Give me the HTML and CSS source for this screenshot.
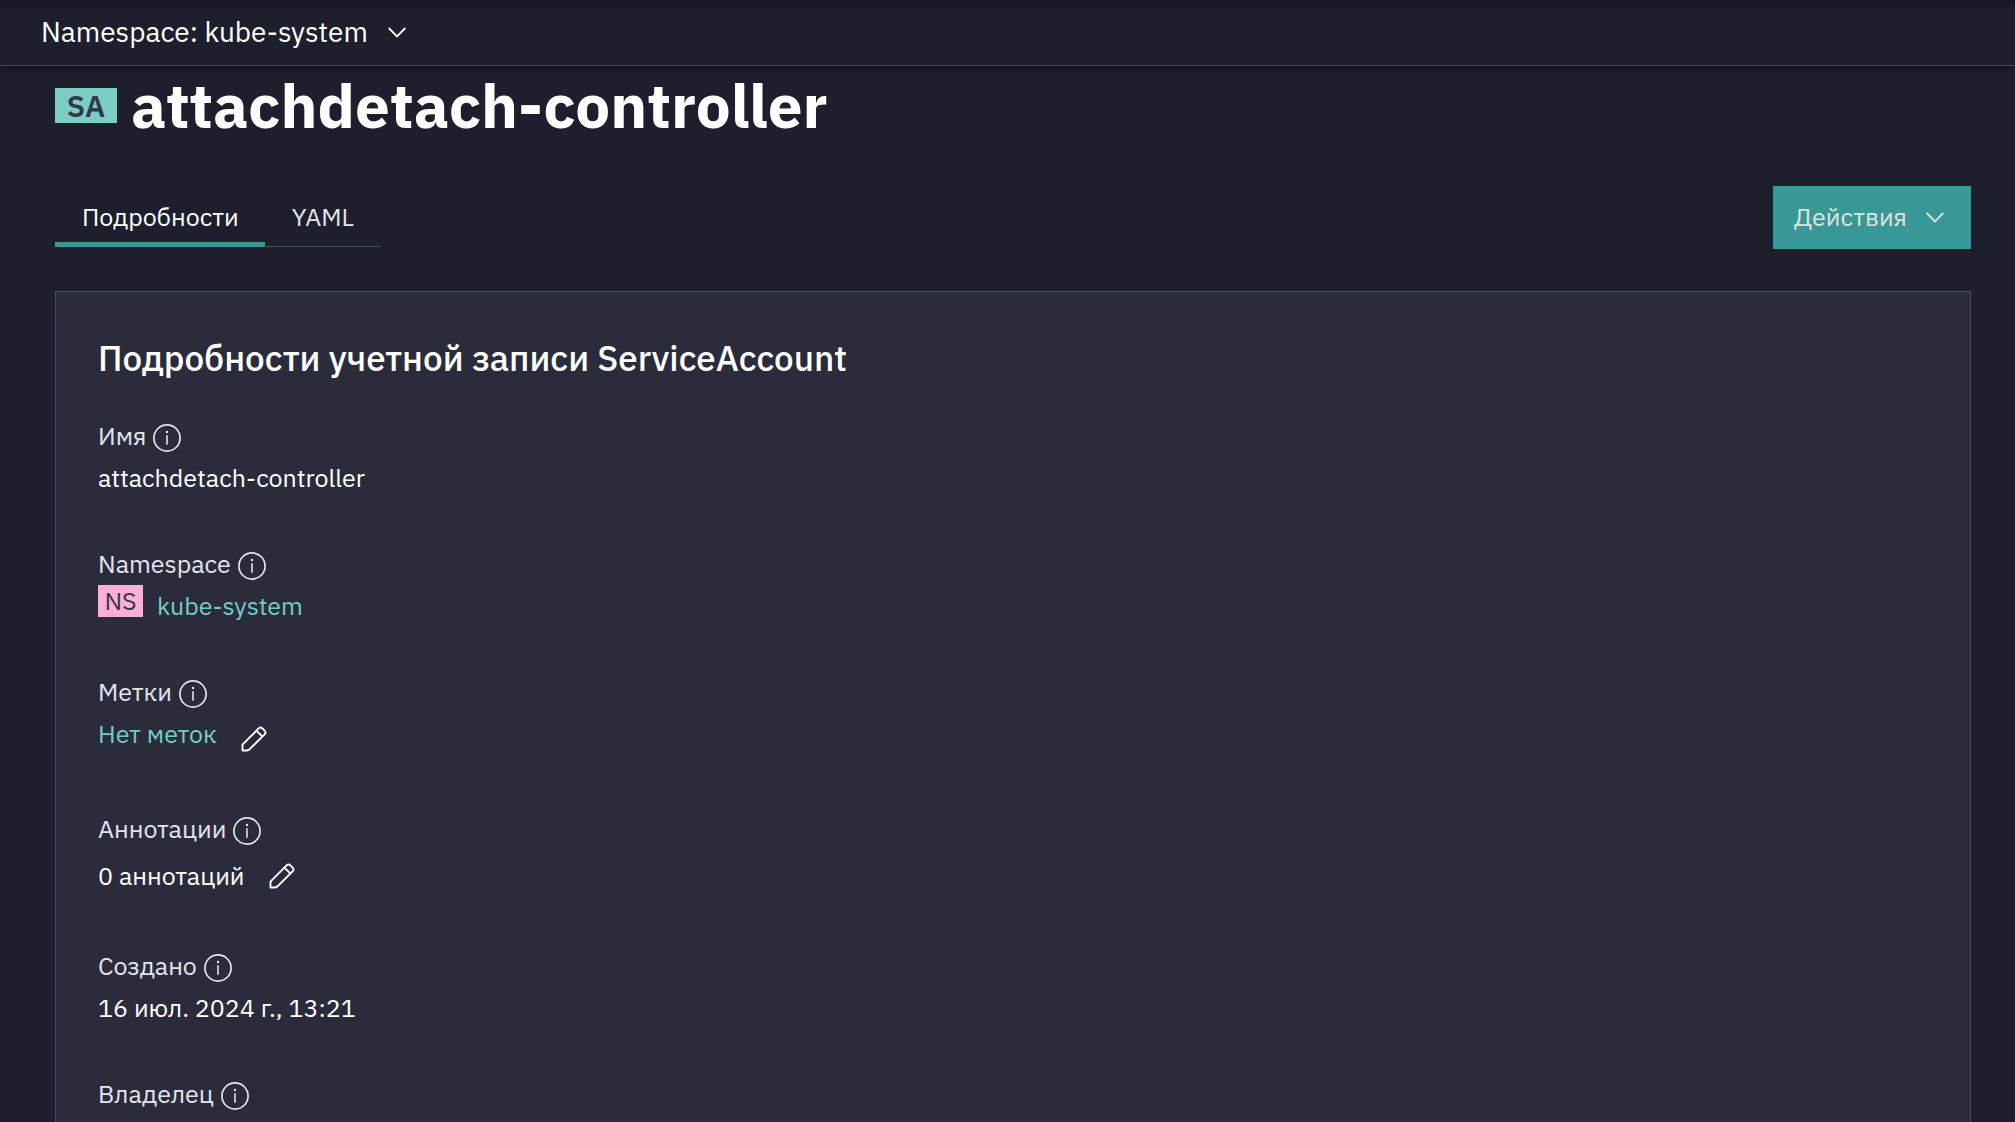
FILE: index.html
```html
<!DOCTYPE html>
<html lang="ru">
  <head>
    <meta charset="UTF-8" />
    <meta name="viewport" content="width=device-width, initial-scale=1.0" />
    <title>attachdetach-controller</title>
    <link rel="stylesheet" href="styles.css">
  </head>
  <body>
    <!-- icons -->
    <svg class="sprite" aria-hidden="true">
      <symbol id="chevron" viewBox="0 0 18 11">
        <path d="M0.7 1l8.3 8.4L17.3 1" fill="none" stroke="currentColor" stroke-width="1.8" />
      </symbol>
      <symbol id="info" viewBox="0 0 28 28">
        <circle cx="14" cy="14" r="13.1" fill="none" stroke="currentColor" stroke-width="1.7" />
        <circle cx="14" cy="8" r="1.2" fill="currentColor" />
        <path d="M14 11.3v9.4" stroke="currentColor" stroke-width="1.6" />
      </symbol>
      <symbol id="pencil" viewBox="0 0 26 26">
        <path d="M1.5 24.5v-5.8L17.6 2.4a2.7 2.7 0 0 1 3.8 0l2.2 2.2a2.7 2.7 0 0 1 0 3.8L8.2 23.6l-2.3 0.9zM15.4 4.7l6 6" fill="none" stroke="currentColor" stroke-width="1.9" stroke-linejoin="round" />
      </symbol>
    </svg>

    <div class="wrapper">
      <header>
        <button type="button" class="namespace">
          Namespace: kube-system
          <svg class="chevron"><use href="#chevron" /></svg>
        </button>
      </header>
      <main>
        <div class="title">
          <span class="badge badge_sa">SA</span>
          <h1>attachdetach-controller</h1>
        </div>

        <div class="toolbar">
          <nav class="tabs">
            <a href="#details" class="active">Подробности</a>
            <a href="#yaml">YAML</a>
          </nav>
          <button type="button" class="actions">
            Действия
            <svg class="chevron"><use href="#chevron" /></svg>
          </button>
        </div>

        <section class="card" id="details">
          <h2>Подробности учетной записи ServiceAccount</h2>
          <dl>
            <div class="field">
              <dt>Имя <svg class="info"><use href="#info" /></svg></dt>
              <dd>attachdetach-controller</dd>
            </div>
            <div class="field">
              <dt>Namespace <svg class="info"><use href="#info" /></svg></dt>
              <dd class="resource">
                <span class="badge badge_ns">NS</span>
                <a href="#kube-system">kube-system</a>
              </dd>
            </div>
            <div class="field">
              <dt>Метки <svg class="info"><use href="#info" /></svg></dt>
              <dd class="editable top">
                <a href="#labels">Нет меток</a>
                <button type="button" class="edit" aria-label="Изменить метки">
                  <svg><use href="#pencil" /></svg>
                </button>
              </dd>
            </div>
            <div class="field">
              <dt>Аннотации <svg class="info"><use href="#info" /></svg></dt>
              <dd class="editable">
                <span>0 аннотаций</span>
                <button type="button" class="edit" aria-label="Изменить аннотации">
                  <svg><use href="#pencil" /></svg>
                </button>
              </dd>
            </div>
            <div class="field">
              <dt>Создано <svg class="info"><use href="#info" /></svg></dt>
              <dd>16 июл. 2024 г., 13:21</dd>
            </div>
            <div class="field">
              <dt>Владелец <svg class="info"><use href="#info" /></svg></dt>
            </div>
          </dl>
        </section>
      </main>
    </div>
  </body>
</html>
```
FILE: styles.css
```css
* {
  box-sizing: border-box;
}
body {
  margin: 0;
  font-family: "IBM Plex Sans", "Noto Sans", sans-serif;
  font-size: 25px;
  line-height: 42px;
  color: #fff;
  background-color: #1e1f2d;
}
h1,
h2,
dl,
dd {
  margin: 0;
}
a {
  color: #73cdc5;
  text-decoration: none;
}
button {
  padding: 0;
  border: 0;
  background: none;
  color: inherit;
  font: inherit;
  cursor: pointer;
}
.sprite {
  display: none;
}
.chevron {
  width: 18px;
  height: 11px;
  margin-top: 2px;
}

.wrapper {
  height: 100vh;
  display: flex;
  flex-direction: column;
  overflow: hidden;
}
.wrapper > header {
  flex: none;
  height: 66px;
  padding: 0 41px 2px;
  display: flex;
  align-items: center;
  border-bottom: 1px solid #454a68;
  background: linear-gradient(#161721, #1e1f2d 12px);
  box-shadow: 0 6px 8px -4px #0e0f16;
}
.namespace {
  display: flex;
  align-items: center;
  gap: 20px;
  font-size: 28px;
}
.wrapper > main {
  flex: 1;
  padding: 0 44px 0 55px;
}

.badge {
  color: #34364a;
  text-align: center;
}
.badge_sa {
  width: 62px;
  font-size: 30px;
  font-weight: 600;
  line-height: 35px;
  background-color: #7bcdc6;
}
.badge_ns {
  width: 45px;
  line-height: 32px;
  background-color: #ffafd4;
}
.title {
  display: flex;
  align-items: center;
  gap: 14px;
}
.title h1 {
  font-size: 62px;
  font-weight: 700;
  line-height: 78px;
}

.toolbar {
  display: flex;
  justify-content: space-between;
  align-items: flex-start;
  margin: 42px 0;
}
.tabs {
  display: flex;
}
.tabs a {
  padding: 10px 27px 8px;
  color: #e4e4ee;
  border-bottom: 1px solid #454a68;
}
.tabs a.active {
  padding: 10px 26px 4px 27px;
  color: #fff;
  border-bottom: 5px solid #379896;
}
.actions {
  display: flex;
  align-items: center;
  gap: 19px;
  height: 63px;
  padding: 0 27px 2px 21px;
  color: #e0e0e0;
  background-color: #379896;
}

.card {
  padding: 40px 42px;
  border: 1px solid #454a68;
  background-color: #2b2c3b;
}
.card h2 {
  margin-bottom: 31px;
  font-size: 35px;
  font-weight: 500;
  line-height: 52px;
}
.field {
  margin-bottom: 44px;
}
.field dt {
  display: flex;
  align-items: center;
  gap: 7px;
  color: #e4e4ee;
}
.info {
  width: 28px;
  height: 28px;
  margin-top: 4px;
}
.resource {
  display: flex;
  align-items: flex-start;
  gap: 14px;
}
.editable {
  display: flex;
  align-items: center;
  gap: 24px;
  height: 51px;
}
.editable.top {
  align-items: flex-start;
}
.edit {
  display: flex;
  align-items: center;
  height: 51px;
}
.edit svg {
  width: 26px;
  height: 26px;
}
```
